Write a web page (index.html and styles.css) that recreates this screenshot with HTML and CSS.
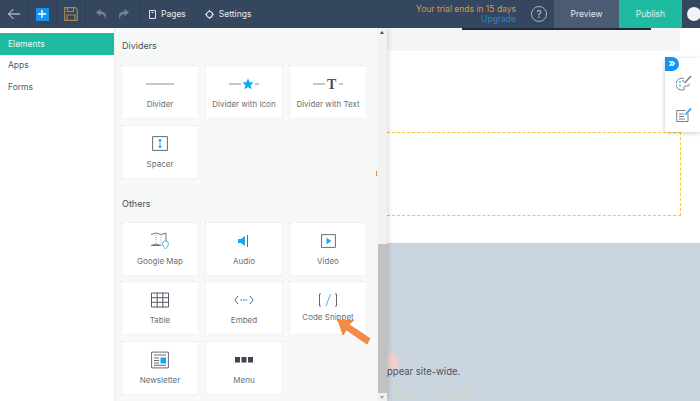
FILE: index.html
```html
<!DOCTYPE html>
<html lang="en">
<head>
    <meta charset="UTF-8">
    <title>Site Editor</title>
    <link rel="stylesheet" href="styles.css">
</head>
<body>
    <header class="topbar">
        <div class="cell cell-back">
            <svg width="14" height="12" viewBox="0 0 14 12" fill="none" stroke="#dfe4ea" stroke-width="1"><path d="M13 6H1.5M6.5 1 1.5 6l5 5"/></svg>
        </div>
        <div class="cell cell-add">
            <span class="add-btn"><svg width="8" height="8" viewBox="0 0 8 8" stroke="#fff" stroke-width="1.4"><path d="M4 0v8M0 4h8"/></svg></span>
        </div>
        <div class="cell cell-save">
            <svg width="14" height="14" viewBox="0 0 14 14" fill="none" stroke="#a5894f" stroke-width="1.2"><path d="M.7.7h10.6l2 2v10.6H.7z"/><path d="M3.5.9v3.6h6V.9M3 13v-5h8v5"/></svg>
        </div>
        <div class="cell cell-history">
            <svg width="11" height="10" viewBox="0 0 11 10" fill="#75828f"><path d="M4.5 0 0 3.6l4.5 3.6V5c2.6 0 4 1.300 4.800 5 1.600-4.500.3-7.400-4.800-7.600z"/></svg>
            <svg width="11" height="10" viewBox="0 0 11 10" fill="#75828f"><path d="M6.500 0 11 3.600 6.500 7.200V5C3.900 5 2.500 6.300 1.700 10 .1 5.500 1.400 2.600 6.500 2.400z"/></svg>
        </div>
        <nav class="menu">
            <a href="#"><svg width="7" height="9" viewBox="0 0 7 9" fill="none" stroke="#dfe4ea"><path d="M.5.500h6v8h-6zM2.500 2.500h2"/></svg>Pages</a>
            <a href="#"><svg width="9" height="9" viewBox="0 0 9 9" fill="none" stroke="#dfe4ea" stroke-width="1.200"><circle cx="4.500" cy="4.500" r="3"/><path d="M4.500 0v1.500M4.500 7.500V9M0 4.500h1.500M7.500 4.500H9"/></svg>Settings</a>
        </nav>
        <div class="trial">
            <span class="trial-note">Your trial ends in 15 days</span>
            <a class="trial-link" href="#">Upgrade</a>
        </div>
        <span class="help">?</span>
        <a class="btn btn-preview" href="#">Preview</a>
        <a class="btn btn-publish" href="#">Publish</a>
        <span class="avatar"></span>
    </header>

    <div class="workspace">
        <aside class="sidebar">
            <a class="side-link active" href="#">Elements</a>
            <a class="side-link" href="#">Apps</a>
            <a class="side-link" href="#">Forms</a>
        </aside>

        <section class="gallery">
            <h2 class="group-title">Dividers</h2>
            <div class="cards">
                <div class="card">
                    <svg width="30" height="12" viewBox="0 0 30 12"><path d="M1 6h28" stroke="#8c8c8c"/></svg>
                    <span>Divider</span>
                </div>
                <div class="card">
                    <svg width="30" height="12" viewBox="0 0 30 12"><path d="M0 6h12M26 6h4" stroke="#8c8c8c"/><path d="M19 .5l1.700 3.700 4 .4-3 2.700.9 4-3.600-2.100-3.600 2.100.9-4-3-2.700 4-.4z" fill="#14a9f5"/></svg>
                    <span>Divider with Icon</span>
                </div>
                <div class="card">
                    <svg width="30" height="12" viewBox="0 0 30 12"><path d="M0 6h12M26 6h4" stroke="#8c8c8c"/><text class="glyph-t" x="14" y="11">T</text></svg>
                    <span>Divider with Text</span>
                </div>
                <div class="card">
                    <svg width="16" height="16" viewBox="0 0 16 16" fill="none"><path d="M.6.6h14.800v13.800H.6z" stroke="#666c75"/><path d="M8 3.500v8" stroke="#14a9f5"/><path d="M8 2.500 10 5H6zM8 12.500 10 10H6z" fill="#14a9f5"/></svg>
                    <span>Spacer</span>
                </div>
            </div>

            <h2 class="group-title group-others">Others</h2>
            <div class="cards">
                <div class="card">
                    <svg width="20" height="18" viewBox="0 0 20 18" fill="none"><path d="M1 2.500 6 1l5 1.500L16 1v8M11 13.500l-5-1.500-5 1.500z" stroke="#6f7680"/><path d="M6 1v11M11 2.500v11" stroke="#a8adb3" stroke-dasharray="1 1"/><path d="M15.500 17s-3-3-3-5a3 3 0 0 1 6 0c0 2-3 5-3 5z" stroke="#49b6f2"/></svg>
                    <span>Google Map</span>
                </div>
                <div class="card">
                    <svg width="14" height="14" viewBox="0 0 14 14" fill="none"><path d="M1 5h3l4-3v10L4 9H1z" fill="#14a9f5"/><path d="M10.500 1v12" stroke="#666c75"/></svg>
                    <span>Audio</span>
                </div>
                <div class="card">
                    <svg width="15" height="14" viewBox="0 0 15 14" fill="none"><path d="M.6.6h13.800v12.800H.6z" stroke="#666c75"/><path d="M5.500 3.800 10.500 7l-5 3.200z" fill="#14a9f5"/></svg>
                    <span>Video</span>
                </div>
                <div class="card">
                    <svg width="18" height="15" viewBox="0 0 18 15" fill="none" stroke="#555b64"><path d="M.5.500h17v14H.5zM.5 5.200h17M.5 9.800h17M6.200.5v14M11.800.5v14"/></svg>
                    <span>Table</span>
                </div>
                <div class="card">
                    <svg width="20" height="10" viewBox="0 0 20 10" fill="none"><path d="M4 1 .8 5 4 9M16 1l3.200 4L16 9" stroke="#666c75"/><path d="M6.500 5h7" stroke="#14a9f5" stroke-width="1.500" stroke-dasharray="1.500 1"/></svg>
                    <span>Embed</span>
                </div>
                <div class="card card-code">
                    <svg width="20" height="14" viewBox="0 0 20 14" fill="none"><path d="M3 1H1.500v12H3M17 1h1.500v12H17" stroke="#666c75"/><path d="M12.500 1 8 13" stroke="#49b6f2"/></svg>
                    <span>Code Snippet</span>
                </div>
                <div class="card">
                    <svg width="18" height="17" viewBox="0 0 18 17" fill="none"><path d="M.6.6h16.800v15.800H.6z" stroke="#666c75"/><path d="M3 3.500h12M3 6.500h5M3 9h5M3 11.500h5M3 13.800h12" stroke="#666c75"/><path d="M9.500 6h5.500v6H9.500z" fill="#14a9f5"/></svg>
                    <span>Newsletter</span>
                </div>
                <div class="card">
                    <svg width="18" height="6" viewBox="0 0 18 6" fill="#3f4650"><path d="M0 0h5v5.500H0zM6.500 0h5v5.500h-5zM13 0h5v5.500h-5z"/></svg>
                    <span>Menu</span>
                </div>
            </div>
            <span class="tick"></span>
        </section>

        <div class="scrollbar">
            <span class="scroll-up"></span>
            <span class="scroll-thumb"></span>
            <span class="scroll-down"></span>
        </div>

        <main class="canvas">
            <div class="band"><span class="band-line"></span></div>
            <div class="blank">
                <div class="dashed"></div>
            </div>
            <div class="footer-zone">
                <span class="blob"></span>
                <p class="footer-note">ppear site-wide.</p>
                <p class="footer-links"><span>Plans</span><span>Contact</span></p>
            </div>
        </main>

        <div class="tools">
            <span class="tools-toggle">»</span>
            <svg width="16" height="17" viewBox="0 0 16 17" fill="none"><path d="M8 3.500a6 6 0 1 0-1 11.500c1.500 0 1.500-1 1-2s.5-2 2-2h2c1 0 1.500-1 1.200-2.500" stroke="#7a7f86"/><path d="M15 1 8.500 8" stroke="#7a7f86" stroke-width="1.500"/><circle cx="4" cy="7" r="1" fill="#49b6f2"/><circle cx="7" cy="6" r="1" fill="#49b6f2"/><circle cx="4" cy="10.500" r="1" fill="#49b6f2"/></svg>
            <svg width="16" height="14" viewBox="0 0 16 14" fill="none"><path d="M12 5.500v8H.7V2.500h9" stroke="#7a7f86"/><path d="M3 6h5M3 8.500h5M3 11h6" stroke="#7a7f86"/><path d="M15 .5 9.500 6.500" stroke="#14a9f5" stroke-width="1.800"/></svg>
        </div>

        <svg class="pointer" width="34" height="26" viewBox="0 0 34 26"><path d="M1 0l16 0-5 4.500 21 14-3 5.500-20.500-14L6 15z" fill="#f58a45" stroke="#f58a45" stroke-linejoin="round"/></svg>
    </div>
</body>
</html>
```

FILE: styles.css
```css
html{
    box-sizing: border-box;
    font-family: "Inter", "Liberation Sans", sans-serif;
    font-size: 9px;
}
*,
*::before,
*::after{
    box-sizing: inherit;
}
body{
    margin: 0;
    height: 401px;
    overflow: hidden;
    display: flex;
    flex-direction: column;
    color: #555b64;
}
a{
    text-decoration: none;
    color: inherit;
}

/* barra superior */
.topbar{
    height: 28px;
    flex-shrink: 0;
    display: flex;
    align-items: stretch;
    background-color: #35465f;
    color: #e6e9ee;
}
.cell{
    display: flex;
    align-items: center;
    justify-content: center;
    border-right: 1px solid #2f3f56;
}
.cell-back{
    width: 28px;
}
.cell-add{
    width: 29px;
}
.cell-save{
    width: 29px;
}
.cell-history{
    width: 54px;
    gap: 11px;
}
.add-btn{
    width: 13px;
    height: 13px;
    display: flex;
    align-items: center;
    justify-content: center;
    background-color: #1492f5;
}
.menu{
    display: flex;
    align-items: center;
    gap: 19px;
    padding-left: 9px;
    font-size: 8.5px;
}
.menu a{
    display: flex;
    align-items: center;
    gap: 5px;
}
.trial{
    margin-left: auto;
    display: flex;
    flex-direction: column;
    align-items: flex-end;
    justify-content: center;
    font-size: 8.5px;
    line-height: 10.500px;
}
.trial-note{
    color: #d99a3e;
}
.trial-link{
    color: #1a86d8;
}
.help{
    width: 16px;
    height: 16px;
    margin: 6px 7px 0 15px;
    border: 1px solid #aab3bf;
    border-radius: 50%;
    text-align: center;
    line-height: 14px;
    font-size: 10px;
    color: #c3cad3;
}
.btn{
    display: flex;
    align-items: center;
    justify-content: center;
    font-size: 8.5px;
}
.btn-preview{
    width: 65px;
    background-color: #4b5b73;
}
.btn-publish{
    width: 63px;
    background-color: #1fbba0;
}
.avatar{
    width: 14px;
    height: 14px;
    margin: 7px -1px 0 5px;
    flex-shrink: 0;
    border-radius: 50%;
    background-color: #f2f3f5;
}

/* zona de trabajo */
.workspace{
    flex-grow: 1;
    display: flex;
    position: relative;
    min-height: 0;
}
.sidebar{
    width: 115px;
    flex-shrink: 0;
    padding-top: 5px;
    background-color: #fff;
    border-right: 1px solid #e9ebee;
}
.side-link{
    display: block;
    height: 21.500px;
    line-height: 21.500px;
    padding-left: 8px;
    font-size: 8.5px;
}
.active{
    height: 22px;
    line-height: 22px;
    background-color: #1fbba0;
    color: #e6f7f3;
}
.gallery{
    width: 263px;
    flex-shrink: 0;
    position: relative;
    padding-left: 6px;
    background-color: #f7f8f8;
}
.group-title{
    margin: 0;
    padding: 12px 0 14px 1px;
    height: 37px;
    line-height: 11px;
    font-size: 9px;
    font-weight: 400;
    color: #4a4f57;
}
.group-others{
    margin-top: 6px;
    padding-top: 13px;
}
.cards{
    display: grid;
    grid-template-columns: repeat(3, 78px);
    grid-auto-rows: 54px;
    gap: 5.500px 6px;
}
.card{
    display: flex;
    flex-direction: column;
    align-items: center;
    padding-top: 7px;
    background-color: #fff;
    border: 1px dotted #e3e5e7;
    font-size: 8px;
    color: #6b7077;
}
.card svg{
    height: 22px;
    flex-shrink: 0;
}
.card span{
    margin-top: 4px;
}
.card-code span{
    margin-top: 1px;
}
.glyph-t{
    font-family: "Liberation Serif", serif;
    font-size: 14px;
    font-weight: 700;
    fill: #4a4f57;
}
.tick{
    position: absolute;
    left: 261px;
    top: 143px;
    width: 1px;
    height: 5px;
    background-color: #d98a55;
}

/* scrollbar */
.scrollbar{
    width: 9px;
    flex-shrink: 0;
    position: relative;
    background-color: #f1f1f1;
    box-shadow: 2px 0 5px rgba(0,0,0,.12);
    z-index: 1;
}
.scroll-up,
.scroll-down{
    position: absolute;
    left: 2px;
    width: 0;
    height: 0;
    border-left: 2.500px solid transparent;
    border-right: 2.500px solid transparent;
}
.scroll-up{
    top: 3px;
    border-bottom: 3px solid #505050;
}
.scroll-down{
    bottom: 2px;
    border-top: 3px solid #a0a0a0;
}
.scroll-thumb{
    position: absolute;
    left: 0;
    right: 0;
    top: 216px;
    height: 149px;
    background-color: #c1c1c1;
}

/* pagina detras del panel */
.canvas{
    flex-grow: 1;
    min-width: 0;
    display: flex;
    flex-direction: column;
    background-color: #fff;
    overflow: hidden;
}
.band{
    height: 23px;
    flex-shrink: 0;
    width: 293px;
    background-color: #f4f5f7;
}
.band-line{
    display: block;
    height: 2px;
    margin-left: 75px;
    width: 189px;
    background-color: #1f2a3a;
}
.blank{
    height: 192px;
    flex-shrink: 0;
    padding-top: 81px;
}
.dashed{
    width: 314px;
    height: 84px;
    margin-left: -20px;
    border: 1px dashed #fbc62f;
}
.footer-zone{
    flex-grow: 1;
    position: relative;
    background-color: #cbd5e0;
}
.blob{
    position: absolute;
    left: -6px;
    top: 110px;
    width: 18px;
    height: 20px;
    border-radius: 50%;
    background-color: #f4cfd0;
    filter: blur(2px);
}
.footer-note{
    position: relative;
    margin: 123px 0 0;
    font-size: 9.500px;
    line-height: 12px;
    color: #4a5360;
}
.footer-links{
    margin: 10px 0 0 5px;
    display: flex;
    gap: 22px;
    font-size: 9px;
    line-height: 11px;
    color: #d5dac8;
}

/* herramientas flotantes */
.tools{
    position: absolute;
    left: 665px;
    top: 30px;
    width: 35px;
    height: 74px;
    display: flex;
    flex-direction: column;
    align-items: center;
    gap: 16px;
    padding: 17px 0 0 2px;
    background-color: #fff;
    border-radius: 3px 0 0 3px;
    box-shadow: 0 1px 4px rgba(0,0,0,.22);
}
.tools-toggle{
    position: absolute;
    left: 0;
    top: -1px;
    width: 14px;
    height: 14px;
    border-radius: 0 7px 7px 0;
    background-color: #1492f5;
    color: #fff;
    font-size: 11px;
    font-weight: 700;
    line-height: 12px;
    text-align: center;
}
.pointer{
    position: absolute;
    left: 337px;
    top: 292px;
    z-index: 2;
}
```
